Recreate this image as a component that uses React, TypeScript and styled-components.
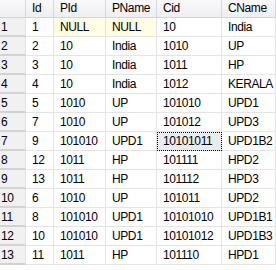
import React from "react";
import styled, { createGlobalStyle } from "styled-components";

const GlobalStyle = createGlobalStyle`
  html, body {
    margin: 0;
    padding: 0;
    background: #ffffff;
  }
`;

type Row = [string, string | null, string | null, string, string];

const rows: Row[] = [
  ["1", null, null, "10", "India"],
  ["2", "10", "India", "1010", "UP"],
  ["3", "10", "India", "1011", "HP"],
  ["4", "10", "India", "1012", "KERALA"],
  ["5", "1010", "UP", "101010", "UPD1"],
  ["7", "1010", "UP", "101012", "UPD3"],
  ["9", "101010", "UPD1", "10101011", "UPD1B2"],
  ["12", "1011", "HP", "101111", "HPD2"],
  ["13", "1011", "HP", "101112", "HPD3"],
  ["6", "1010", "UP", "101011", "UPD2"],
  ["8", "101010", "UPD1", "10101010", "UPD1B1"],
  ["10", "101010", "UPD1", "10101012", "UPD1B3"],
  ["11", "1011", "HP", "101110", "HPD1"],
];

const columns = ["Id", "PId", "PName", "Cid", "CName"];

// selected cell: row index 6, column Cid
const selRow = 6;
const selCol = 3;

const App = () => {
  return (
    <>
      <GlobalStyle />
      <Grid>
        <Corner />
        {columns.map((c) => (
          <HeaderCell key={c}>{c}</HeaderCell>
        ))}
        {rows.map((r, i) => (
          <React.Fragment key={i}>
            <RowHeader>{i + 1}</RowHeader>
            {r.map((v, j) => (
              <Cell key={j} $null={v === null} $selected={i === selRow && j === selCol}>
                {v === null ? "NULL" : v}
              </Cell>
            ))}
          </React.Fragment>
        ))}
      </Grid>
    </>
  );
};

const Grid = styled.div`
  display: grid;
  grid-template-columns: 26px 28px 52px 51px 65px 1fr;
  grid-template-rows: 18px;
  grid-auto-rows: 19px;
  width: 276px;
  overflow: hidden;
  font-family: "Liberation Sans", Arial, sans-serif;
  font-size: 12px;
  letter-spacing: -0.4px;
  color: #000000;
`;

const HeaderBase = styled.div`
  box-sizing: border-box;
  background: linear-gradient(#f9f9fa, #eeeff2);
  border-right: 1px solid #d8d8dc;
  border-bottom: 1px solid #d5d5d9;
`;

const Corner = styled(HeaderBase)``;

const HeaderCell = styled(HeaderBase)`
  padding-left: 6px;
  line-height: 16px;
  white-space: nowrap;
`;

const RowHeader = styled.div`
  box-sizing: border-box;
  background: #f1f1f1;
  border-right: 1px solid #e2e2e2;
  border-bottom: 2px solid #d2d2d2;
  padding-left: 1px;
  line-height: 18px;
  white-space: nowrap;
`;

const Cell = styled.div<{ $null: boolean; $selected: boolean }>`
  box-sizing: border-box;
  background: ${(p) => (p.$selected ? "#e8ecf1" : p.$null ? "#fffde3" : "#ffffff")};
  border-right: 1px solid #e4e4e4;
  border-bottom: 1px solid #e4e4e4;
  outline: ${(p) => (p.$selected ? "1px dotted #000000" : "none")};
  outline-offset: -1px;
  padding-left: 6px;
  line-height: 18px;
  white-space: nowrap;
  overflow: hidden;
`;

export default App;
